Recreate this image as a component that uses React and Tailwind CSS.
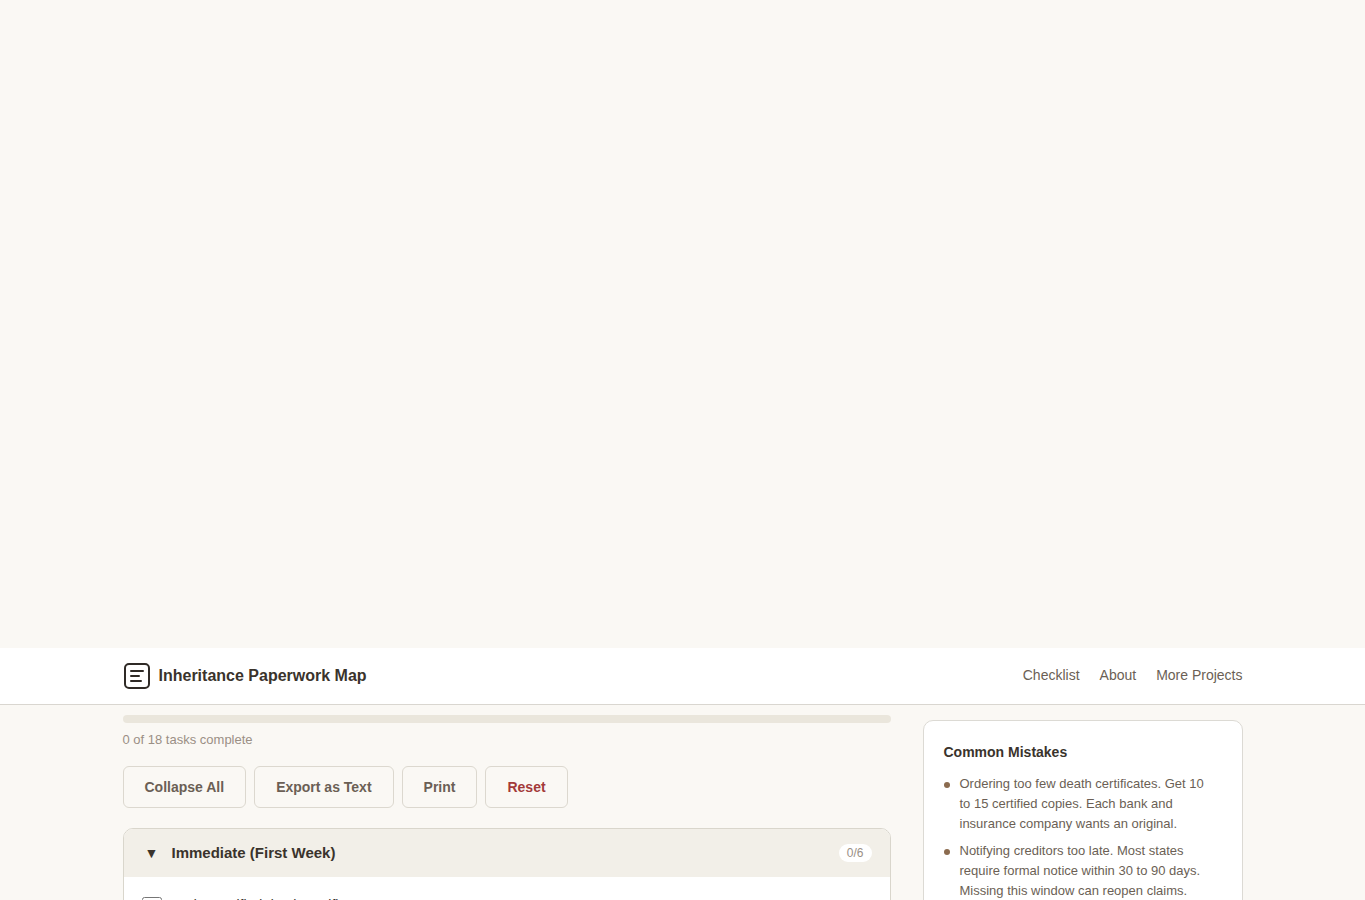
import React from 'react';

const navLinks = [
  { label: 'Checklist', href: '#checklist' },
  { label: 'About', href: '#about' },
  { label: 'More Projects', href: '#projects' },
];

const actions = ['Collapse All', 'Export as Text', 'Print', 'Reset'];

const mistakes = [
  'Ordering too few death certificates. Get 10 to 15 certified copies. Each bank and insurance company wants an original.',
  'Notifying creditors too late. Most states require formal notice within 30 to 90 days. Missing this window can reopen claims.',
];

const Logo = () => (
  <svg width="28" height="28" viewBox="0 0 28 28" fill="none" stroke="#2f2a26" strokeWidth="2" strokeLinecap="round" aria-hidden="true">
    <rect x="2" y="2" width="24" height="24" rx="4" />
    <path d="M8 9h12M8 14h8M8 19h10" />
  </svg>
);

const Header = () => (
  <header className="bg-white border-b border-[#d9d6d0]">
    <div className="max-w-[1120px] mx-auto h-14 flex items-center justify-between">
      <a href="#top" className="flex items-center gap-2 text-base font-bold text-[#3a332c]">
        <Logo />
        Inheritance Paperwork Map
      </a>
      <nav className="flex gap-5 pb-0.5 text-sm text-[#6b5f55]">
        {navLinks.map((link) => (
          <a key={link.label} href={link.href}>{link.label}</a>
        ))}
      </nav>
    </div>
  </header>
);

const Checklist = () => (
  <section id="checklist" className="flex-1 min-w-0 pt-[10px]">
    <div role="progressbar" aria-label="Tasks complete" aria-valuenow={0} aria-valuemax={18} className="h-2 rounded bg-[#eae6dc]" />
    <p className="mt-[7px] text-[13px] leading-5 text-[#9a8f85]">0 of 18 tasks complete</p>

    <div className="flex flex-wrap gap-2 mt-4 mb-5">
      {actions.map((action) => (
        <button
          key={action}
          type="button"
          className={`h-[42px] px-[21px] rounded-md border border-[#dcd8cf] text-sm font-bold ${action === 'Reset' ? 'text-[#a33a3a]' : 'text-[#6b5f55]'}`}
        >
          {action}
        </button>
      ))}
    </div>

    <div className="rounded-[10px] border border-[#d9d6cc] bg-white overflow-hidden">
      <button type="button" aria-expanded="true" className="w-full h-12 px-[18px] flex items-center bg-[#f2efe8] text-[#3a332c]">
        <span className="w-5 mr-[10px] text-sm text-center">▼</span>
        <span className="text-[15px] font-bold">Immediate (First Week)</span>
        <span className="ml-auto px-2 rounded-full bg-white text-xs leading-[18px] text-[#9a8f85]">0/6</span>
      </button>
      <label className="flex items-start gap-3 px-[18px] py-[18px] text-sm text-[#3a332c]">
        <input type="checkbox" className="w-5 h-5 mt-0.5" />
        Order certified death certificates
      </label>
    </div>
  </section>
);

const Mistakes = () => (
  <aside className="w-80 mt-[15px] p-5 rounded-[10px] border border-[#dcdad4] bg-white">
    <h2 className="text-sm leading-[22px] font-bold text-[#3a332c]">Common Mistakes</h2>
    <ul className="mt-[11px] pr-2 flex flex-col gap-[7px] text-[13px] leading-5 text-[#6b5f55]">
      {mistakes.map((text) => (
        <li key={text} className="flex gap-[10px]">
          <span className="w-[6px] h-[6px] mt-2 shrink-0 rounded-full bg-[#8b6b4f]" />
          {text}
        </li>
      ))}
    </ul>
  </aside>
);

const App = () => {
  return (
    <div className="h-screen overflow-hidden bg-[#faf8f4] pt-[72vh] font-['Liberation_Sans',sans-serif]">
      <Header />
      <main className="max-w-[1120px] mx-auto flex items-start gap-8">
        <Checklist />
        <Mistakes />
      </main>
    </div>
  );
};

export default App;
